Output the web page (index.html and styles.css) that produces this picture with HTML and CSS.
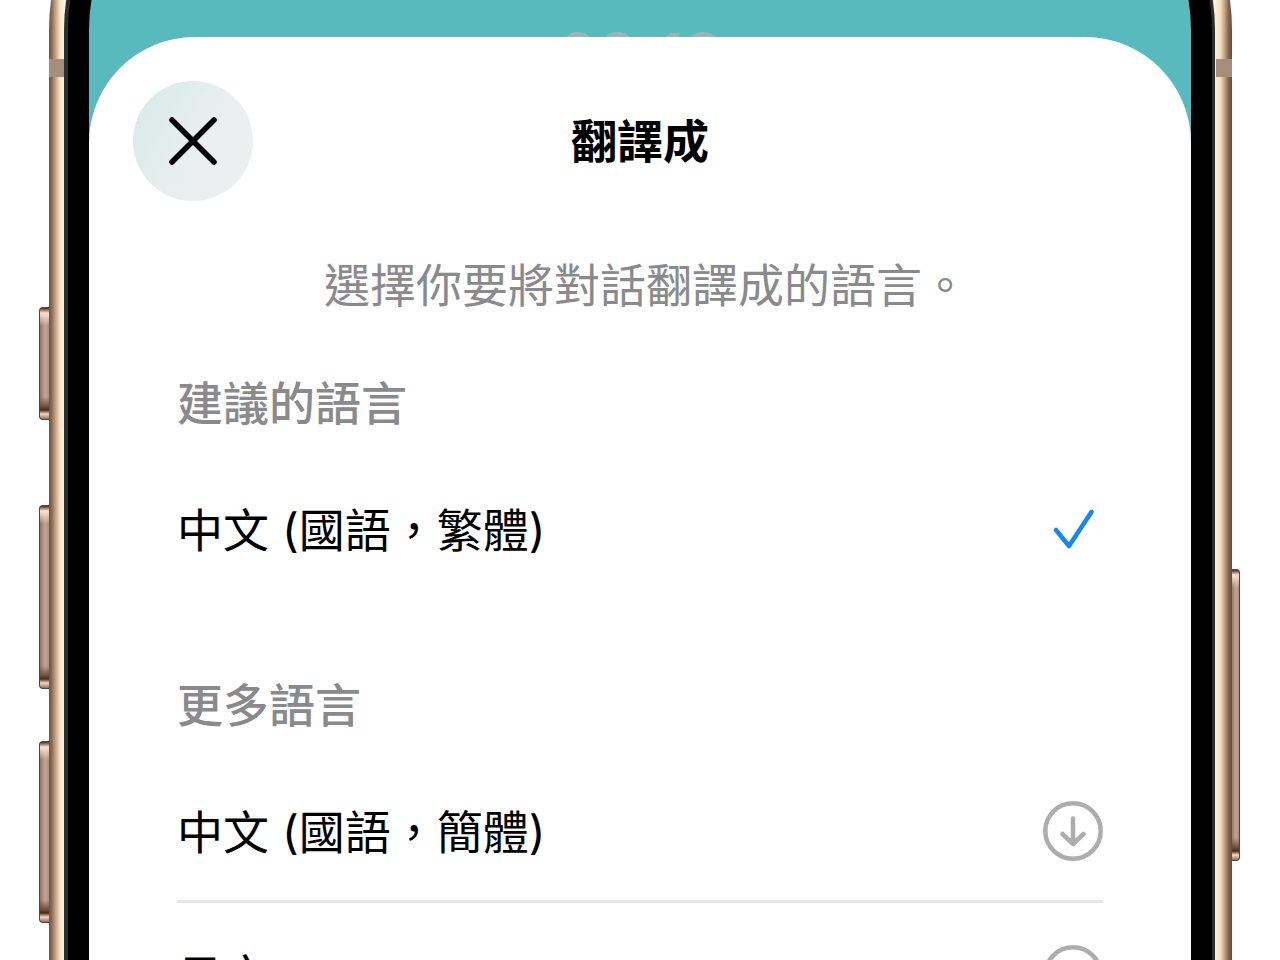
FILE: index.html
```html
<!DOCTYPE html>
<html lang="zh-Hant">

<head>
    <meta charset="UTF-8">
    <meta name="viewport" content="width=device-width, initial-scale=1">
    <title>翻譯成</title>
    <link rel="stylesheet" href="styles.css">
</head>

<body>
    <div class="stage">
        <span class="side-key action-key"></span>
        <span class="side-key volume-up"></span>
        <span class="side-key volume-down"></span>
        <span class="side-key power-key"></span>

        <div class="phone">
            <div class="rim">
                <div class="bezel">
                    <main class="screen">
                        <div class="clock">09:12</div>

                        <section class="sheet">
                            <header class="sheet-header">
                                <button class="close-btn" type="button" aria-label="關閉">
                                    <svg viewBox="0 0 120 120" aria-hidden="true">
                                        <path d="M39 39L81 81M81 39L39 81" />
                                    </svg>
                                </button>
                                <h1>翻譯成</h1>
                            </header>

                            <p class="intro">選擇你要將對話翻譯成的語言。</p>

                            <div class="group">
                                <h2>建議的語言</h2>
                                <button class="language" type="button">
                                    <span>中文 (國語，繁體)</span>
                                    <svg class="icon check" viewBox="0 0 60 60" aria-hidden="true">
                                        <path d="M13 31L26 47L48.5 13" />
                                    </svg>
                                </button>
                            </div>

                            <div class="group">
                                <h2>更多語言</h2>
                                <button class="language" type="button">
                                    <span>中文 (國語，簡體)</span>
                                    <svg class="icon download" viewBox="0 0 60 60" aria-hidden="true">
                                        <circle cx="30" cy="30" r="27.7" />
                                        <path d="M30 17.5V43M19.5 33L30 43L40.5 33" />
                                    </svg>
                                </button>
                                <button class="language" type="button">
                                    <span>日文</span>
                                    <svg class="icon download" viewBox="0 0 60 60" aria-hidden="true">
                                        <circle cx="30" cy="30" r="27.7" />
                                        <path d="M30 17.5V43M19.5 33L30 43L40.5 33" />
                                    </svg>
                                </button>
                            </div>
                        </section>
                    </main>
                </div>
            </div>
            <span class="antenna antenna-left"></span>
            <span class="antenna antenna-right"></span>
        </div>
    </div>
</body>

</html>
```

FILE: styles.css
```css
* {
    box-sizing: border-box;
}

body {
    margin: 0;
    background: #fff;
    font-family: Inter, "Noto Sans CJK TC", sans-serif;
    color: #000;
}

h1,
h2,
p {
    margin: 0;
}

button {
    border: none;
    padding: 0;
    background: none;
    font: inherit;
    color: inherit;
    cursor: pointer;
}

.stage {
    position: relative;
    height: 100vh;
    padding: 0 48px 0 49px;
    overflow: hidden;
}

/* phone body */
.phone {
    position: relative;
    margin-top: -195px;
    padding: 17px 17px 0 15px;
    border-radius: 225px 225px 0 0;
    background:
        linear-gradient(to right, #6d5343, #8c6f57 3px, #c9ab8c 7px, #f8e2c8 11px, #fff0da 15px) left / 50% 100% no-repeat,
        linear-gradient(to left, #5f4a3c, #836552 4px, #c4a484 8px, #f3dcc0 12px, #fdeedb 17px) right / 50% 100% no-repeat;
}

.rim {
    padding: 4px 3px 0 4px;
    border-radius: 208px 208px 0 0;
    background: #2c2e30;
}

.bezel {
    padding: 21px 21px 0;
    border-radius: 204px 204px 0 0;
    background: #000;
}

.screen {
    padding-top: 153px;
    border-radius: 183px 183px 0 0;
    background: #59babd;
    overflow: hidden;
}

.clock {
    height: 37px;
    padding-top: 23px;
    font-size: 62px;
    line-height: 66px;
    font-weight: 600;
    text-align: center;
    color: #96b7bc;
    overflow: hidden;
}

.antenna {
    position: absolute;
    top: 254px;
    height: 18px;
    background: #a68e7b;
}

.antenna-left {
    left: 0;
    width: 15px;
}

.antenna-right {
    right: 0;
    width: 16px;
}

.side-key {
    position: absolute;
    left: 39px;
    width: 11px;
    border: 1px solid #5d4234;
    border-right: none;
    border-radius: 4px 0 0 4px;
    background:
        linear-gradient(to bottom, #4a2e20, #fbe3d2 5px, transparent 18px),
        linear-gradient(to top, #8f6d58, #f3d9c4 5px, #4a2b1b 9px, #6d4a38 12px, transparent 22px),
        linear-gradient(to right, #8f7163, #c3a496 5px, #a98a7a);
}

.action-key {
    top: 307px;
    height: 113px;
}

.volume-up {
    top: 505px;
    height: 184px;
}

.volume-down {
    top: 741px;
    height: 182px;
}

.power-key {
    top: 569px;
    right: 40px;
    left: auto;
    width: 9px;
    height: 292px;
    border: 1px solid #5d4234;
    border-left: none;
    border-radius: 0 4px 4px 0;
}

/* sheet */
.sheet {
    padding: 44px 44px 0;
    border-radius: 106px 106px 0 0;
    background: #fff;
}

.sheet-header {
    display: grid;
    grid-template-columns: 120px 1fr 120px;
    align-items: center;
}

.close-btn {
    width: 120px;
    height: 120px;
    border-radius: 50%;
    background: linear-gradient(120deg, #d5e9e9, #e8eeee 50%, #f0f0f0);
}

.close-btn svg {
    display: block;
    fill: none;
    stroke: #000;
    stroke-width: 5.5;
    stroke-linecap: round;
}

h1 {
    font-size: 46px;
    line-height: 60px;
    font-weight: 600;
    text-align: center;
}

.intro {
    margin-top: 54px;
    padding-left: 12px;
    font-size: 46px;
    line-height: 60px;
    text-align: center;
    color: #8a8a8d;
}

.group {
    padding: 0 44px;
    margin-top: 58px;
}

.group + .group {
    margin-top: 74px;
}

h2 {
    margin-bottom: 24px;
    font-size: 46px;
    line-height: 60px;
    font-weight: 500;
    color: #8a8a8d;
}

.language {
    display: flex;
    align-items: center;
    justify-content: space-between;
    width: 100%;
    height: 144px;
    font-size: 46px;
    line-height: 60px;
    text-align: left;
}

.language span {
    padding-top: 2px;
}

.language:not(:last-child) {
    box-shadow: inset 0 -3px #e6e6e7;
}

.icon {
    width: 60px;
    height: 60px;
    fill: none;
    stroke-linecap: round;
    stroke-linejoin: round;
}

.check {
    stroke: #1388ee;
    stroke-width: 4.5;
}

.download {
    stroke: #adadaf;
    stroke-width: 4.5;
}
```
